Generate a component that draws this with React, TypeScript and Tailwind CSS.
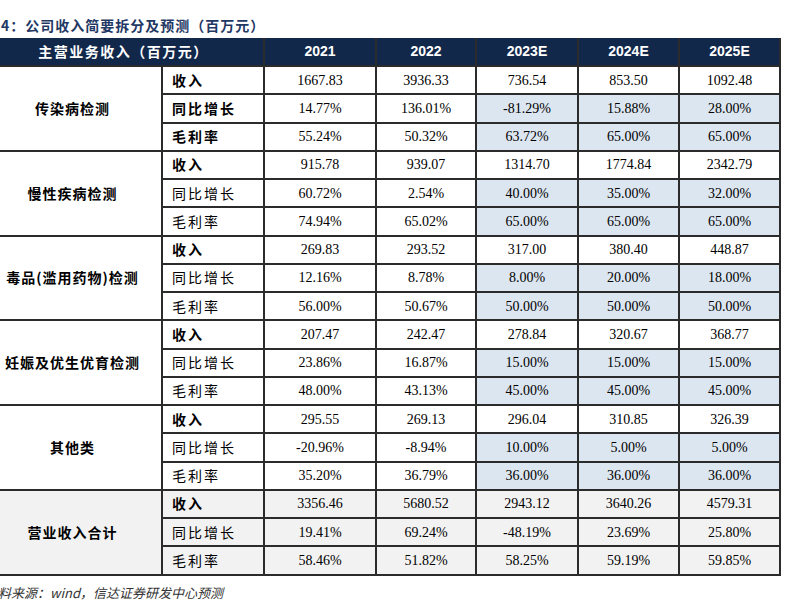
const YEARS = ["2021", "2022", "2023E", "2024E", "2025E"];

type Row = [string, string[]];
type Group = { name: string; rows: Row[]; boldAll?: boolean; total?: boolean };

const GROUPS: Group[] = [
  {
    name: "传染病检测",
    boldAll: true,
    rows: [
      ["收入", ["1667.83", "3936.33", "736.54", "853.50", "1092.48"]],
      ["同比增长", ["14.77%", "136.01%", "-81.29%", "15.88%", "28.00%"]],
      ["毛利率", ["55.24%", "50.32%", "63.72%", "65.00%", "65.00%"]],
    ],
  },
  {
    name: "慢性疾病检测",
    rows: [
      ["收入", ["915.78", "939.07", "1314.70", "1774.84", "2342.79"]],
      ["同比增长", ["60.72%", "2.54%", "40.00%", "35.00%", "32.00%"]],
      ["毛利率", ["74.94%", "65.02%", "65.00%", "65.00%", "65.00%"]],
    ],
  },
  {
    name: "毒品(滥用药物)检测",
    rows: [
      ["收入", ["269.83", "293.52", "317.00", "380.40", "448.87"]],
      ["同比增长", ["12.16%", "8.78%", "8.00%", "20.00%", "18.00%"]],
      ["毛利率", ["56.00%", "50.67%", "50.00%", "50.00%", "50.00%"]],
    ],
  },
  {
    name: "妊娠及优生优育检测",
    rows: [
      ["收入", ["207.47", "242.47", "278.84", "320.67", "368.77"]],
      ["同比增长", ["23.86%", "16.87%", "15.00%", "15.00%", "15.00%"]],
      ["毛利率", ["48.00%", "43.13%", "45.00%", "45.00%", "45.00%"]],
    ],
  },
  {
    name: "其他类",
    rows: [
      ["收入", ["295.55", "269.13", "296.04", "310.85", "326.39"]],
      ["同比增长", ["-20.96%", "-8.94%", "10.00%", "5.00%", "5.00%"]],
      ["毛利率", ["35.20%", "36.79%", "36.00%", "36.00%", "36.00%"]],
    ],
  },
  {
    name: "营业收入合计",
    total: true,
    rows: [
      ["收入", ["3356.46", "5680.52", "2943.12", "3640.26", "4579.31"]],
      ["同比增长", ["19.41%", "69.24%", "-48.19%", "23.69%", "25.80%"]],
      ["毛利率", ["58.46%", "51.82%", "58.25%", "59.19%", "59.85%"]],
    ],
  },
];

const cjk = { fontFamily: '"Noto Sans CJK SC", sans-serif' };
const serif = { fontFamily: '"Liberation Serif", "Noto Sans CJK SC", serif' };

export default function App() {
  return (
    <div className="w-[788px] h-[601px] overflow-hidden bg-white">
      {/* Title */}
      <div className="h-[38px] flex items-end pb-[6px]">
        <div
          className="-ml-[14px] text-[14px] font-bold leading-none text-[#1f3864] tracking-[1px]"
          style={cjk}
        >
          表4：公司收入简要拆分及预测（百万元）
        </div>
      </div>

      <table className="-ml-[16px] border-collapse table-fixed w-[796px] text-[14px] text-black">
        <colgroup>
          <col className="w-[178px]" />
          <col className="w-[102px]" />
          <col className="w-[112px]" />
          <col className="w-[100px]" />
          <col className="w-[102px]" />
          <col className="w-[101px]" />
          <col className="w-[101px]" />
        </colgroup>
        <thead>
          <tr className="h-[28px] bg-[#12284b] text-white">
            <th colSpan={2} className="font-bold border-r-2 border-[#2b2b2b] tracking-[1.5px]" style={cjk}>
              主营业务收入（百万元）
            </th>
            {YEARS.map((y) => (
              <th
                key={y}
                className="font-bold border-x-2 border-[#2b2b2b]"
                style={{ fontFamily: '"Liberation Sans", Arial, sans-serif' }}
              >
                {y}
              </th>
            ))}
          </tr>
        </thead>
        <tbody>
          {GROUPS.map((g) =>
            g.rows.map(([label, vals], i) => (
              <tr key={g.name + label} className={`h-[28.25px] ${g.total ? "bg-[#f2f2f2]" : "bg-white"}`}>
                {i === 0 && (
                  <td
                    rowSpan={3}
                    className="text-center font-bold border-y-2 border-[#2b2b2b] tracking-[1px]"
                    style={cjk}
                  >
                    {g.name}
                  </td>
                )}
                <td
                  className={`pl-[9px] border-2 border-[#2b2b2b] tracking-[2px] ${
                    i === 0 || g.boldAll ? "font-bold" : "font-normal"
                  }`}
                  style={cjk}
                >
                  {label}
                </td>
                {vals.map((v, j) => (
                  <td
                    key={j}
                    className={`text-center border-2 border-[#2b2b2b] ${
                      !g.total && i > 0 && j >= 2 ? "bg-[#dce6f1]" : ""
                    }`}
                    style={serif}
                  >
                    {v}
                  </td>
                ))}
              </tr>
            ))
          )}
        </tbody>
      </table>

      {/* Source */}
      <div
        className="-ml-[15px] mt-[10px] text-[13px] italic text-[#333] leading-none"
        style={cjk}
      >
        资料来源：wind，信达证券研发中心预测
      </div>
    </div>
  );
}
